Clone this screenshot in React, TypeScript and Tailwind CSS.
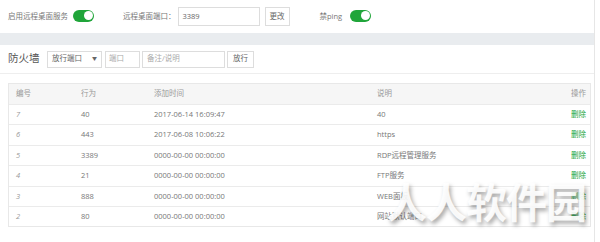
const rows = [
  { id: "7", port: "40", time: "2017-06-14 16:09:47", note: "40" },
  { id: "6", port: "443", time: "2017-06-08 10:06:22", note: "https" },
  { id: "5", port: "3389", time: "0000-00-00 00:00:00", note: "RDP远程管理服务" },
  { id: "4", port: "21", time: "0000-00-00 00:00:00", note: "FTP服务" },
  { id: "3", port: "888", time: "0000-00-00 00:00:00", note: "WEB面板" },
  { id: "2", port: "80", time: "0000-00-00 00:00:00", note: "网站默认端口" },
];

function Toggle() {
  return (
    <span className="inline-flex items-center justify-end w-[21px] h-[12px] rounded-full bg-[#20a53a] px-[1.5px]">
      <span className="w-[9px] h-[9px] rounded-full bg-white" />
    </span>
  );
}

export default function App() {
  return (
    <div
      className="relative w-[600px] h-[242px] overflow-hidden bg-white text-[7.5px] text-[#777]"
      style={{ fontFamily: '"Open Sans", "Noto Sans CJK SC", sans-serif' }}
    >
      <div className="w-[595px] h-full border-r border-[#e6e6e6]">
        {/* top settings */}
        <div className="h-[33px] flex items-center pl-[8px]">
          <span>启用远程桌面服务</span>
          <span className="ml-[5px]"><Toggle /></span>
          <span className="ml-[29px]">远程桌面端口：</span>
          <div className="ml-[2px] w-[82px] h-[19px] border border-[#ddd] flex items-center px-[4px] text-[#666]">3389</div>
          <button className="ml-[5px] w-[25px] h-[19px] border border-[#ddd] bg-white text-[#666]">更改</button>
          <span className="ml-[30px]">禁ping</span>
          <span className="ml-[8px]"><Toggle /></span>
        </div>
        <div className="h-[12px] bg-[#e9ecef]" />

        {/* firewall */}
        <div className="h-[29px] flex items-center pl-[8px] border-b border-[#eee]">
          <span className="text-[10.5px] text-[#555] w-[39px]">防火墙</span>
          <div className="w-[55px] h-[17px] border border-[#ddd] flex items-center justify-between px-[4px] text-[#666]">
            <span>放行端口</span>
            <span className="text-[5px]">▼</span>
          </div>
          <div className="ml-[3px] w-[35px] h-[17px] border border-[#ddd] flex items-center px-[3px] text-[#aaa]">端口</div>
          <div className="ml-[2px] w-[83px] h-[17px] border border-[#ddd] flex items-center px-[4px] text-[#aaa]">备注/说明</div>
          <button className="ml-[2px] w-[27px] h-[17px] border border-[#ddd] bg-white text-[#666]">放行</button>
        </div>

        {/* table */}
        <div className="mx-[8px] mt-[9px] w-[583px] border border-[#e8e8e8]">
          <div className="grid grid-cols-[65px_73px_223px_1fr_40px] h-[20px] items-center bg-[#f6f6f6] text-[#999]">
            <span className="pl-[7px]">编号</span>
            <span className="pl-[7px]">行为</span>
            <span className="pl-[7px]">添加时间</span>
            <span className="pl-[7px]">说明</span>
            <span className="text-right pr-[4px]">操作</span>
          </div>
          {rows.map((r) => (
            <div
              key={r.id}
              className="grid grid-cols-[65px_73px_223px_1fr_40px] h-[20.4px] items-center border-t border-[#ebebeb]"
            >
              <span className="pl-[7px] italic text-[#999]">{r.id}</span>
              <span className="pl-[7px]">{r.port}</span>
              <span className="pl-[7px]">{r.time}</span>
              <span className="pl-[7px]">{r.note}</span>
              <span className="text-right pr-[4px] text-[#20a53a]">删除</span>
            </div>
          ))}
        </div>
      </div>

      {/* watermark */}
      <div
        className="absolute left-[386px] top-[180px] text-[41px] font-bold tracking-[-1px] text-white/90 leading-none"
        style={{ textShadow: "2px 3px 4px rgba(0,0,0,0.35)", fontFamily: '"Noto Sans CJK SC", sans-serif' }}
      >
        人人软件园
      </div>
    </div>
  );
}
